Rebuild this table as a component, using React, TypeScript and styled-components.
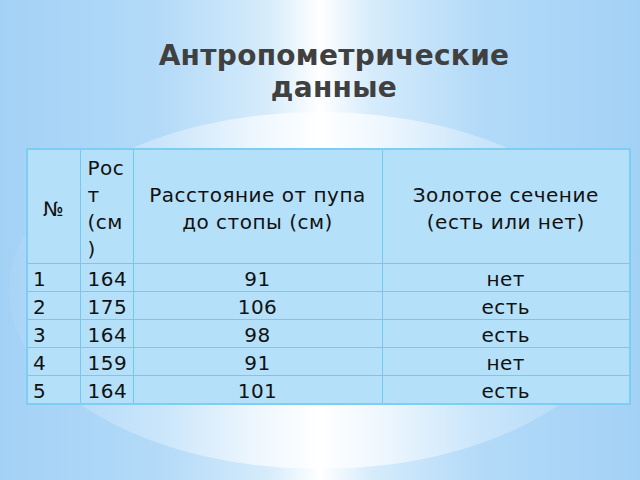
import React from 'react';
import styled, { createGlobalStyle } from 'styled-components';

const GlobalStyle = createGlobalStyle`
  html, body {
    margin: 0;
    padding: 0;
  }
  body {
    font-family: "DejaVu Sans", "Noto Sans", sans-serif;
  }
`;

const Slide = styled.div`
  position: relative;
  width: 640px;
  height: 480px;
  overflow: hidden;
  background: linear-gradient(
    90deg,
    #a3d1f6 0%,
    #b3daf8 25%,
    #d6ecfb 42%,
    #ffffff 50%,
    #d6ecfb 58%,
    #b3daf8 75%,
    #a3d1f6 100%
  );

  &::before {
    content: '';
    position: absolute;
    left: 9px;
    top: 112px;
    width: 622px;
    height: 357px;
    border-radius: 50%;
    background: linear-gradient(
      90deg,
      #a9d4f7 0%,
      #cbe6fb 25%,
      #eef7fe 40%,
      #ffffff 50%,
      #eef7fe 60%,
      #cbe6fb 75%,
      #a9d4f7 100%
    );
  }
`;

const Content = styled.div`
  position: relative;
  display: flex;
  flex-direction: column;
`;

const Title = styled.h1`
  margin: 0;
  padding: 40px 0 0 28px;
  font-size: 28px;
  line-height: 32px;
  letter-spacing: 0.3px;
  font-weight: bold;
  color: #404040;
  text-align: center;
`;

const Table = styled.table`
  margin: 44px 0 0 26px;
  width: 603px;
  table-layout: fixed;
  border-collapse: collapse;
  border: 2px solid #7ccef3;
  background: #b5e0f9;
  font-size: 20px;
  letter-spacing: 0.5px;
  color: #111;
`;

const HeadCell = styled.th<{ $align?: string }>`
  height: 105px;
  padding: 5px 4px 0 ${(p) => (p.$align === 'left' ? '7px' : '4px')};
  border: 1px solid #74c9f0;
  font-weight: normal;
  line-height: 27px;
  vertical-align: middle;
  text-align: ${(p) => p.$align || 'center'};
`;

const Cell = styled.td<{ $align?: string; $pad?: number }>`
  height: 24px;
  padding: 3px 0 0 ${(p) => p.$pad ?? 0}px;
  border: 1px solid #74c9f0;
  line-height: 24px;
  text-align: ${(p) => p.$align || 'center'};
  white-space: nowrap;
`;

const rows = [
  { n: 1, height: 164, dist: 91, gold: 'нет' },
  { n: 2, height: 175, dist: 106, gold: 'есть' },
  { n: 3, height: 164, dist: 98, gold: 'есть' },
  { n: 4, height: 159, dist: 91, gold: 'нет' },
  { n: 5, height: 164, dist: 101, gold: 'есть' },
];

export default function App() {
  return (
    <>
      <GlobalStyle />
      <Slide>
        <Content>
          <Title>
            Антропометрические
            <br />
            данные
          </Title>
          <Table>
            <colgroup>
              <col style={{ width: 53 }} />
              <col style={{ width: 53 }} />
              <col style={{ width: 249 }} />
              <col style={{ width: 248 }} />
            </colgroup>
            <thead>
              <tr>
                <HeadCell>№</HeadCell>
                <HeadCell $align="left">
                  Рос
                  <br />
                  т
                  <br />
                  (см
                  <br />)
                </HeadCell>
                <HeadCell>
                  Расстояние от пупа
                  <br />
                  до стопы (см)
                </HeadCell>
                <HeadCell>
                  Золотое сечение
                  <br />
                  (есть или нет)
                </HeadCell>
              </tr>
            </thead>
            <tbody>
              {rows.map((r) => (
                <tr key={r.n}>
                  <Cell $align="left" $pad={5}>
                    {r.n}
                  </Cell>
                  <Cell $align="left" $pad={7}>
                    {r.height}
                  </Cell>
                  <Cell>{r.dist}</Cell>
                  <Cell>{r.gold}</Cell>
                </tr>
              ))}
            </tbody>
          </Table>
        </Content>
      </Slide>
    </>
  );
}
